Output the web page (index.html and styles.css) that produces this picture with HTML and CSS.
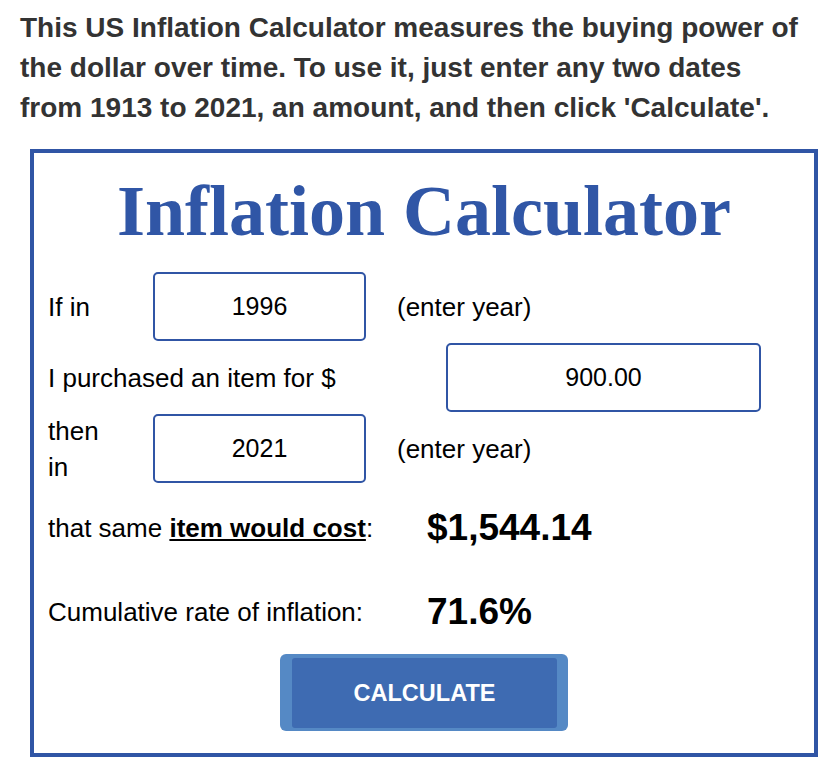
FILE: index.html
```html
<!DOCTYPE html>
<html lang="en">
<head>
  <meta charset="UTF-8">
  <title>US Inflation Calculator</title>
  <link rel="stylesheet" href="styles.css">
</head>
<body>

  <p class="intro">This US Inflation Calculator measures the buying power of the dollar over time. To use it, just enter any two dates from 1913 to 2021, an amount, and then click 'Calculate'.</p>

  <div class="calc-box">
    <h1 class="calc-title">Inflation Calculator</h1>

    <div class="row">
      <span class="label-year">If in</span>
      <input type="text" class="field field-year" id="fromYear" value="1996">
      <span class="note">(enter year)</span>
    </div>

    <div class="row">
      <span class="label-amount">I purchased an item for $</span>
      <input type="text" class="field field-amount" id="amount" value="900.00">
    </div>

    <div class="row">
      <span class="label-year">then in</span>
      <input type="text" class="field field-year" id="toYear" value="2021">
      <span class="note">(enter year)</span>
    </div>

    <div class="result">
      <span class="label-result">that same <b><u>item would cost</u></b>:</span>
      <span class="value" id="cost">$1,544.14</span>
    </div>

    <div class="result">
      <span class="label-result">Cumulative rate of inflation:</span>
      <span class="value" id="rate">71.6%</span>
    </div>

    <div class="actions">
      <button class="calc-btn" onclick="calculate()"><span>CALCULATE</span></button>
    </div>
  </div>

  <script>
    // CPI-U annual averages for the two years shown
    var cpi = { 1996: 156.9, 2021: 270.97 };

    function calculate() {
      let from = document.getElementById("fromYear").value.trim();
      let to = document.getElementById("toYear").value.trim();
      let amount = parseFloat(document.getElementById("amount").value) || 0;

      if (!cpi[from] || !cpi[to]) return;

      let cost = amount * cpi[to] / cpi[from];
      let rate = (cpi[to] / cpi[from] - 1) * 100;

      document.getElementById("cost").innerText = "$" + cost.toLocaleString("en-US", { minimumFractionDigits: 2, maximumFractionDigits: 2 });
      document.getElementById("rate").innerText = rate.toFixed(1) + "%";
    }
  </script>

</body>
</html>
```

FILE: styles.css
```css
body {
  margin: 0;
  font-family: "Liberation Sans", Arial, sans-serif;
  color: #000;
  background: #fff;
}
.intro {
  margin: 0 0 21px;
  padding: 8px 20px 0;
  font-size: 28px;
  line-height: 40px;
  font-weight: bold;
  color: #333;
}
.calc-box {
  margin: 0 10px 0 30px;
  border: 4px solid #3055a5;
  padding: 18px 14px 22px;
}
.calc-title {
  margin: 0 0 20px;
  font-family: "Liberation Serif", "Times New Roman", serif;
  font-size: 72px;
  line-height: 80px;
  font-weight: bold;
  color: #3056a6;
  text-align: center;
}
.row {
  display: flex;
  align-items: center;
  height: 71px;
  font-size: 26px;
  line-height: 36px;
}
.label-year {
  width: 105px;
  padding-right: 35px;
  box-sizing: border-box;
}
.label-amount {
  width: 398px;
}
.field {
  height: 69px;
  box-sizing: border-box;
  border: 2px solid #3055a5;
  border-radius: 5px;
  font-family: "Liberation Sans", Arial, sans-serif;
  font-size: 25px;
  color: #000;
  text-align: center;
  padding: 0;
}
.field-year {
  width: 213px;
}
.field-amount {
  width: 315px;
}
.note {
  margin-left: 31px;
}
.result {
  display: flex;
  align-items: center;
  height: 84px;
  font-size: 26px;
}
.row + .result {
  margin-top: 2px;
}
.label-result {
  width: 379px;
}
.value {
  font-size: 37px;
  font-weight: bold;
}
.actions {
  display: flex;
  justify-content: center;
}
.calc-btn {
  width: 288px;
  padding: 4px 11px 3px 12px;
  background-color: #5589c5;
  border: none;
  border-radius: 6px;
  cursor: pointer;
}
.calc-btn span {
  display: block;
  height: 70px;
  line-height: 70px;
  background-color: #3e6bb2;
  border-radius: 3px;
  font-family: "Liberation Sans", Arial, sans-serif;
  font-size: 23.5px;
  font-weight: bold;
  color: #fff;
}
.calc-btn:hover span {
  background-color: #345d9e;
}
```
